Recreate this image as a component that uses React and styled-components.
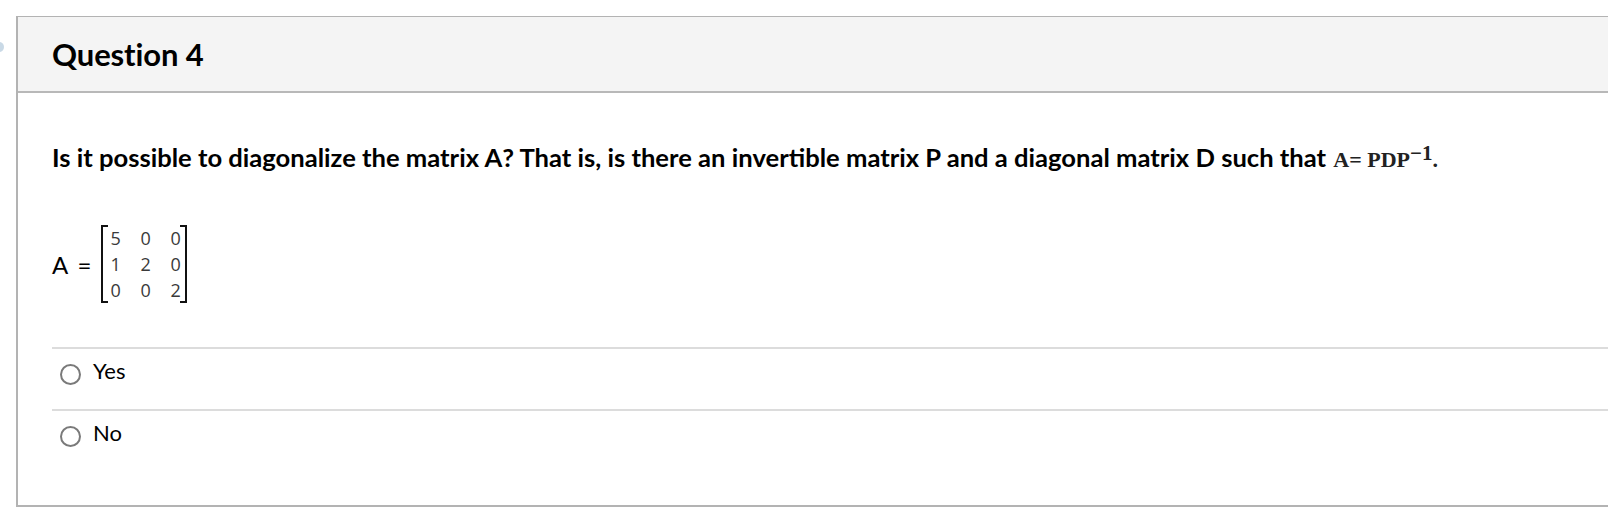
import React from "react";
import styled, { createGlobalStyle } from "styled-components";

const GlobalStyle = createGlobalStyle`
  html, body {
    margin: 0;
    padding: 0;
    background: #ffffff;
  }
  body {
    font-family: Lato, "Open Sans", "Liberation Sans", sans-serif;
    color: #000;
    overflow: hidden;
  }
`;

const Page = styled.div`
  position: relative;
  width: 1608px;
  height: 508px;
  padding: 16px 0 0 16px;
  box-sizing: border-box;
`;

const SideMarker = styled.div`
  position: absolute;
  left: -5px;
  top: 42px;
  width: 9px;
  height: 10px;
  border-radius: 50%;
  background: #c9d9e6;
`;

const Card = styled.div`
  width: 1640px;
  border: 1px solid #b3b3b3;
  border-left-width: 2px;
  border-bottom-width: 2px;
  box-sizing: border-box;
`;

const Header = styled.div`
  height: 74px;
  display: flex;
  align-items: center;
  padding: 0 34px;
  background: #f4f4f4;
  border-bottom: 2px solid #b8b8b8;
  font-size: 31px;
  font-weight: 700;
  letter-spacing: -0.1px;
`;

const Body = styled.div`
  padding: 49px 0 34px 34px;
`;

const Prompt = styled.p`
  margin: 0;
  font-size: 25.6px;
  font-weight: 700;
  line-height: 30px;
`;

const Formula = styled.span`
  font-family: "Liberation Serif", "Times New Roman", serif;
  font-weight: 700;
  font-size: 22px;
  color: #222;
  margin-left: 1px;
`;

const Sup = styled.sup`
  font-size: 21px;
  vertical-align: 7px;
  line-height: 0;
`;

const MatrixRow = styled.div`
  display: flex;
  align-items: center;
  margin-top: 50px;
  gap: 9px;
`;

const MatrixLabel = styled.span`
  font-size: 24px;
  font-weight: 400;
  word-spacing: 4px;
`;

const Bracket = styled.div`
  position: relative;
  display: grid;
  grid-template-columns: repeat(3, 30px);
  padding: 0 0 0 8px;
  border-left: 2px solid #111;
  border-right: 2px solid #111;
  font-family: "Open Sans", "Liberation Sans", sans-serif;
  font-size: 18px;
  line-height: 26px;
  color: #3a3a3a;
  width: 86px;
  box-sizing: border-box;

  &::before,
  &::after {
    content: "";
    position: absolute;
    left: 0;
    right: 0;
    height: 2px;
    border-left: 5px solid #111;
    border-right: 5px solid #111;
    box-sizing: border-box;
  }
  &::before {
    top: 0;
  }
  &::after {
    bottom: 0;
  }
`;

const Cell = styled.span`
  text-align: left;
`;

const Answers = styled.div`
  margin-top: 44px;
`;

const Answer = styled.label`
  display: flex;
  align-items: center;
  height: 60px;
  box-sizing: content-box;
  padding: 0 0 0 8px;
  border-top: 2px solid #dcdcdc;
  gap: 12px;
  font-size: 22px;
`;

const Radio = styled.span`
  width: 21px;
  height: 21px;
  border: 2px solid #7a7a7a;
  border-radius: 50%;
  box-sizing: border-box;
  flex-shrink: 0;
  margin-top: -10px;
`;

const Label = styled.span`
  margin-top: -18px;
`;

const matrix = [
  [5, 0, 0],
  [1, 2, 0],
  [0, 0, 2],
];

export default function App() {
  return (
    <>
      <GlobalStyle />
      <Page>
        <SideMarker />
        <Card>
          <Header>Question 4</Header>
          <Body>
            <Prompt>
              Is it possible to diagonalize the matrix A? That is, is there an
              invertible matrix P and a diagonal matrix D such that{" "}
              <Formula>
                A= PDP<Sup>−1</Sup>.
              </Formula>
            </Prompt>
            <MatrixRow>
              <MatrixLabel>A =</MatrixLabel>
              <Bracket>
                {matrix.flat().map((v, i) => (
                  <Cell key={i}>{v}</Cell>
                ))}
              </Bracket>
            </MatrixRow>
            <Answers>
              <Answer>
                <Radio />
                <Label>Yes</Label>
              </Answer>
              <Answer>
                <Radio />
                <Label>No</Label>
              </Answer>
            </Answers>
          </Body>
        </Card>
      </Page>
    </>
  );
}
